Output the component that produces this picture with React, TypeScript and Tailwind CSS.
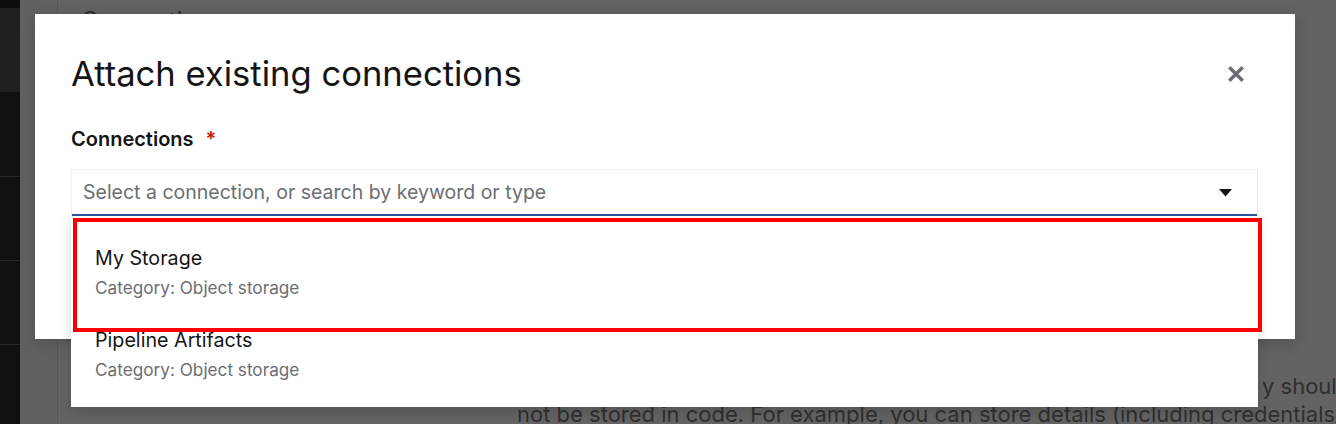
import React from "react";

function CloseIcon() {
  return (
    <svg width="16" height="16" viewBox="0 0 16 16" aria-hidden="true">
      <path d="M2.5 2.5 L13.5 13.5 M13.5 2.5 L2.5 13.5" stroke="#6a6e73" strokeWidth="3.4" strokeLinecap="square" />
    </svg>
  );
}

function Caret() {
  return (
    <svg width="13" height="8" viewBox="0 0 13 8" aria-hidden="true">
      <path d="M0 0 H13 L6.5 7.5 Z" fill="#151515" />
    </svg>
  );
}

function MenuItem({ title, sub }: { title: string; sub: string }) {
  return (
    <div className="flex flex-col gap-[4px] px-[24px] py-[13px]">
      <div className="text-[19.7px] leading-[28px] text-[#151515]">{title}</div>
      <div className="text-[17.2px] leading-[24px] text-[#6a6e73]">{sub}</div>
    </div>
  );
}

export default function App() {
  return (
    <div
      className="relative flex h-[424px] w-[1336px] overflow-hidden bg-[#636363]"
      style={{ fontFamily: "Inter, 'Noto Sans', sans-serif" }}
    >
      {/* dark sidebar */}
      <div className="flex w-[20px] shrink-0 flex-col bg-[#0f1012]">
        <div className="h-[8px] bg-[#0c0d0f]" />
        <div className="h-[84px] bg-[#1e1f22]" />
        <div className="h-[85px] border-b border-[#26272a]" />
        <div className="h-[84px] border-b border-[#26272a]" />
        <div className="h-[84px] border-b border-[#26272a]" />
      </div>
      {/* page behind the backdrop */}
      <div className="flex min-w-0 flex-1">
        <div className="w-[38px] shrink-0 border-r border-[#575757] bg-[#616161]" />
        <div className="flex min-w-0 flex-1 flex-col overflow-hidden">
          <div className="mt-[6px] pl-[23px] text-[24px] leading-[30px] text-[#2e2e2e]">Connections</div>
          <div className="mt-[336px] flex flex-col pl-[459px] text-[22px] leading-[28px] text-[#2f2f2f] whitespace-nowrap">
            <div className="pl-[745px]">y should</div>
            <div>not be stored in code. For example, you can store details (including credentials</div>
          </div>
        </div>
      </div>

      {/* modal */}
      <div className="absolute left-[35px] top-[14px] flex h-[325px] w-[1260px] flex-col bg-white pl-[36px] pr-[37px] shadow-[0_4px_16px_rgba(0,0,0,0.18)]">
        <div className="mt-[38px] flex items-center justify-between">
          <h1 className="text-[34.6px] leading-[42px] font-normal text-[#151515]">Attach existing connections</h1>
          <div className="mr-[14px] mt-[2px] flex h-[16px] w-[16px] items-center justify-center">
            <CloseIcon />
          </div>
        </div>
        <div className="mt-[32px] flex items-center text-[20px] leading-[26px] font-semibold text-[#151515]">
          Connections
          <span className="ml-[12px] text-[#c9190b]">*</span>
        </div>
        <div className="relative mt-[17px]">
          <div className="flex h-[47px] items-center justify-between border border-b-0 border-[#efefef] pl-[11px] pr-[25px] shadow-[inset_0_-2px_0_#2b56a5]">
            <span className="text-[19.5px] text-[#6a6e73]">Select a connection, or search by keyword or type</span>
            <Caret />
          </div>
          <div className="absolute left-0 right-0 top-full z-10 flex flex-col bg-white pt-[15px] pb-[12px] shadow-[0_4px_12px_rgba(0,0,0,0.16)]">
            <MenuItem title="My Storage" sub="Category: Object storage" />
            <MenuItem title="Pipeline Artifacts" sub="Category: Object storage" />
          </div>
        </div>
      </div>

      {/* annotation highlight */}
      <div className="absolute left-[73px] top-[218px] z-20 h-[114px] w-[1189px] border-[4px] border-[#ff0000]" />
    </div>
  );
}
